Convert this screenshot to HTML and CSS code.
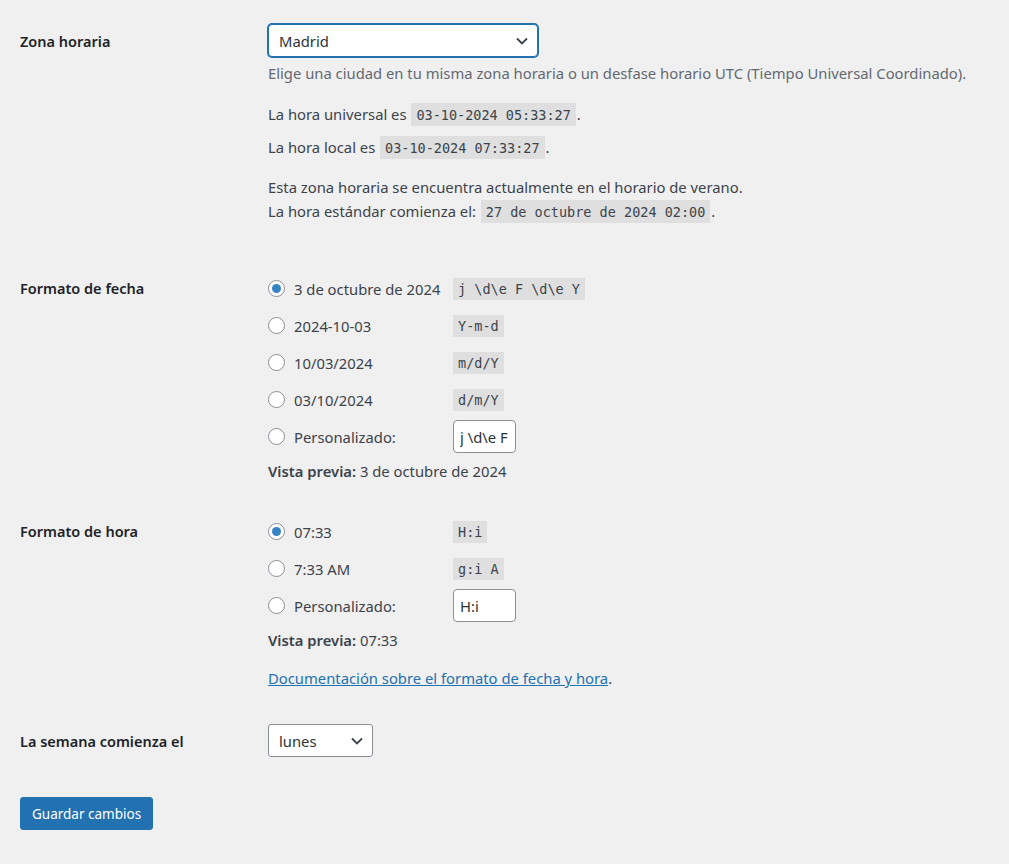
FILE: index.html
```html
<!DOCTYPE html>
<html lang="es">
<head>
  <meta charset="UTF-8" />
  <meta name="viewport" content="width=device-width, initial-scale=1.0" />
  <title>Ajustes generales</title>
  <link rel="stylesheet" href="styles.css">
</head>
<body>
  <form class="settings">
    <div class="row row-tz">
      <div class="label label-select">Zona horaria</div>
      <div class="field">
        <div class="select-wrap">
          <select class="select select-focus" id="timezone">
            <option>Madrid</option>
          </select>
          <svg class="chevron" width="12" height="8" viewBox="0 0 12 8"><path d="M1 1.5 L6 6.5 L11 1.5" fill="none" stroke="#3c434a" stroke-width="1.8"/></svg>
        </div>
        <p class="description">Elige una ciudad en tu misma zona horaria o un desfase horario UTC (Tiempo Universal Coordinado).</p>
        <p class="time utc">La hora universal es <code>03-10-2024 05:33:27</code>.</p>
        <p class="time local">La hora local es <code>03-10-2024 07:33:27</code>.</p>
        <p class="dst">Esta zona horaria se encuentra actualmente en el horario de verano.<br>La hora estándar comienza el: <code>27 de octubre de 2024 02:00</code>.</p>
      </div>
    </div>

    <div class="row row-date">
      <div class="label">Formato de fecha</div>
      <div class="field">
        <label class="choice"><input type="radio" name="date_format" checked><span class="choice-text">3 de octubre de 2024</span><code>j \d\e F \d\e Y</code></label>
        <label class="choice"><input type="radio" name="date_format"><span class="choice-text">2024-10-03</span><code>Y-m-d</code></label>
        <label class="choice"><input type="radio" name="date_format"><span class="choice-text">10/03/2024</span><code>m/d/Y</code></label>
        <label class="choice"><input type="radio" name="date_format"><span class="choice-text">03/10/2024</span><code>d/m/Y</code></label>
        <label class="choice"><input type="radio" name="date_format"><span class="choice-text">Personalizado:</span><input type="text" class="custom" value="j \d\e F \d\e Y"></label>
        <p class="preview"><strong>Vista previa:</strong> 3 de octubre de 2024</p>
      </div>
    </div>

    <div class="row row-time">
      <div class="label">Formato de hora</div>
      <div class="field">
        <label class="choice"><input type="radio" name="time_format" checked><span class="choice-text">07:33</span><code>H:i</code></label>
        <label class="choice"><input type="radio" name="time_format"><span class="choice-text">7:33 AM</span><code>g:i A</code></label>
        <label class="choice"><input type="radio" name="time_format"><span class="choice-text">Personalizado:</span><input type="text" class="custom" value="H:i"></label>
        <p class="preview"><strong>Vista previa:</strong> 07:33</p>
        <p class="doc"><a href="#">Documentación sobre el formato de fecha y hora</a>.</p>
      </div>
    </div>

    <div class="row row-week">
      <div class="label label-select">La semana comienza el</div>
      <div class="field">
        <div class="select-wrap">
          <select class="select select-small" id="start_of_week">
            <option>lunes</option>
          </select>
          <svg class="chevron" width="12" height="8" viewBox="0 0 12 8"><path d="M1 1.5 L6 6.5 L11 1.5" fill="none" stroke="#3c434a" stroke-width="1.8"/></svg>
        </div>
      </div>
    </div>

    <div class="submit">
      <button type="button" class="button-primary">Guardar cambios</button>
    </div>
  </form>
</body>
</html>
```

FILE: styles.css
```css
body {
  margin: 0;
  background: #f0f0f1;
  color: #3c434a;
  font-family: "Noto Sans", "Open Sans", sans-serif;
  font-size: 14.8px;
}
p {
  margin: 0;
}
.settings {
  padding: 0 20px;
}
.row {
  display: grid;
  grid-template-columns: 248px 1fr;
}
.row-tz {
  padding-top: 24px;
}
.row-date {
  margin-top: 47px;
}
.row-time {
  margin-top: 31px;
}
.row-week {
  margin-top: 35px;
}
.label {
  color: #1d2327;
  font-weight: 600;
  font-size: 14.5px;
  line-height: 37px;
}
.label-select {
  margin-top: -1px;
}
.select-wrap {
  position: relative;
  display: inline-block;
}
.select {
  appearance: none;
  -webkit-appearance: none;
  height: 33px;
  width: 270px;
  padding: 0 30px 0 10px;
  font-family: inherit;
  font-size: 14.8px;
  color: #2c3338;
  background: #fff;
  border: 1px solid #8c8f94;
  border-radius: 4px;
  display: block;
}
.select-focus {
  border-color: #2271b1;
  box-shadow: 0 0 0 1px #2271b1;
  outline: none;
}
.select-small {
  width: 105px;
  border-radius: 3px;
}
.chevron {
  position: absolute;
  right: 10px;
  top: 13px;
  pointer-events: none;
}
.description {
  margin-top: 6px;
  line-height: 21px;
  color: #646970;
}
.time {
  line-height: 22px;
}
.utc {
  margin-top: 19px;
}
.local {
  margin-top: 11px;
}
.dst {
  margin-top: 17px;
  line-height: 24px;
}
code {
  font-family: "DejaVu Sans Mono", "Liberation Mono", monospace;
  font-size: 13.5px;
  background: rgba(0,0,0,0.07);
  color: #3c434a;
  padding: 4px 5px 3px;
  margin: 0 1px;
  line-height: 1;
}
.choice {
  display: flex;
  align-items: center;
  height: 37px;
}
.choice input[type="radio"] {
  appearance: none;
  -webkit-appearance: none;
  width: 17px;
  height: 17px;
  margin: 0 9px 0 0;
  border: 1px solid #8c8f94;
  border-radius: 50%;
  background: #fff;
  display: grid;
  place-items: center;
  flex: none;
}
.choice input[type="radio"]:checked::before {
  content: "";
  width: 9px;
  height: 9px;
  border-radius: 50%;
  background: #3582c4;
}
.choice-text {
  width: 159px;
  flex: none;
}
.choice code {
  margin: 0;
  padding: 3px 5px 2px;
  line-height: 17px;
}
.custom {
  width: 63px;
  height: 33px;
  box-sizing: border-box;
  padding: 0 6px;
  font-family: inherit;
  font-size: 14.8px;
  color: #2c3338;
  border: 1px solid #8c8f94;
  border-radius: 4px;
  background: #fff;
}
.preview {
  margin-top: 6px;
  line-height: 21px;
}
.preview strong {
  font-weight: 600;
}
.doc {
  margin-top: 17px;
  line-height: 21px;
}
.doc a {
  color: #2271b1;
}
.submit {
  margin-top: 37px;
}
.button-primary {
  height: 33px;
  padding: 0 11px;
  background: #2271b1;
  color: #fff;
  border: 1px solid #2271b1;
  border-radius: 3px;
  font-family: inherit;
  font-size: 13.5px;
  cursor: pointer;
}
```
